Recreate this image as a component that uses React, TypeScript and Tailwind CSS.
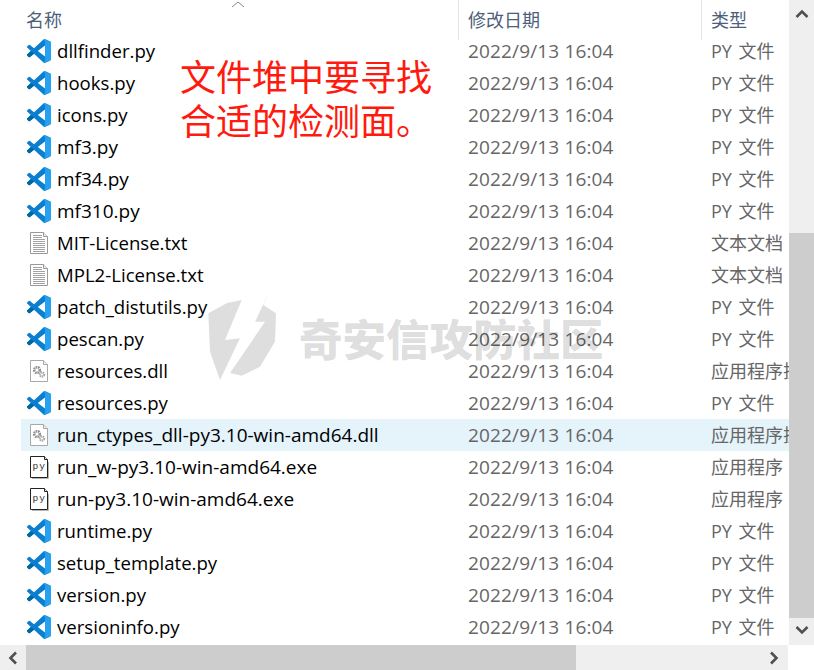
import React from "react";

const time = "2022/9/13 16:04";
type Kind = "vs" | "txt" | "dll" | "exe";
const files: [string, Kind, string][] = [
  ["dllfinder.py", "vs", "PY 文件"],
  ["hooks.py", "vs", "PY 文件"],
  ["icons.py", "vs", "PY 文件"],
  ["mf3.py", "vs", "PY 文件"],
  ["mf34.py", "vs", "PY 文件"],
  ["mf310.py", "vs", "PY 文件"],
  ["MIT-License.txt", "txt", "文本文档"],
  ["MPL2-License.txt", "txt", "文本文档"],
  ["patch_distutils.py", "vs", "PY 文件"],
  ["pescan.py", "vs", "PY 文件"],
  ["resources.dll", "dll", "应用程序扩展"],
  ["resources.py", "vs", "PY 文件"],
  ["run_ctypes_dll-py3.10-win-amd64.dll", "dll", "应用程序扩展"],
  ["run_w-py3.10-win-amd64.exe", "exe", "应用程序"],
  ["run-py3.10-win-amd64.exe", "exe", "应用程序"],
  ["runtime.py", "vs", "PY 文件"],
  ["setup_template.py", "vs", "PY 文件"],
  ["version.py", "vs", "PY 文件"],
  ["versioninfo.py", "vs", "PY 文件"],
];

function VsIcon() {
  return (
    <svg width="24" height="24" viewBox="0 0 24 24">
      <path fill="#0a7fd0" d="M23.15 2.587L18.21.21a1.494 1.494 0 0 0-1.705.29l-9.46 8.63-4.12-3.128a.999.999 0 0 0-1.276.057L.327 7.261A1 1 0 0 0 .326 8.74L3.899 12 .326 15.26a1 1 0 0 0 .001 1.479L1.65 17.94a.999.999 0 0 0 1.276.057l4.12-3.128 9.46 8.63a1.492 1.492 0 0 0 1.704.29l4.942-2.377A1.5 1.5 0 0 0 24 20.06V3.939a1.5 1.5 0 0 0-.85-1.352zm-5.146 14.861L10.826 12l7.178-5.448v10.896z" />
      <path fill="#24a2f0" d="M16.5.5a1.49 1.49 0 0 1 1.71-.29l4.94 2.38A1.5 1.5 0 0 1 24 3.94v16.12a1.5 1.5 0 0 1-.85 1.35l-4.94 2.38a1.49 1.49 0 0 1-1.71-.29L18 22V2z" />
      <path fill="#0066aa" d="M.33 15.26 3.9 12l3.14 2.87-4.12 3.13a1 1 0 0 1-1.27-.06L.33 16.74a1 1 0 0 1 0-1.48z" />
    </svg>
  );
}

function Page({ children, stroke = "#9a9a9a", fold = 4 }: { children?: React.ReactNode; stroke?: string; fold?: number }) {
  return (
    <svg width="24" height="24" viewBox="0 0 24 24">
      <path fill="#fff" stroke={stroke} d={`M3.5 1.5h${17 - fold}l${fold} ${fold}v${21 - fold}h-17z`} />
      <path fill="#eeeeee" stroke={stroke} d={`M${20.5 - fold} 1.5v${fold}h${fold}`} />
      {children}
    </svg>
  );
}

function FileIcon({ kind }: { kind: Kind }) {
  if (kind === "vs") return <VsIcon />;
  if (kind === "txt")
    return (
      <Page>
        {[4, 6, 8, 10, 12, 14, 16, 18, 20].map((y) => (
          <path key={y} stroke="#a4a4a4" d={`M6 ${y + 0.5}h${y < 7 ? 9 : 12}`} />
        ))}
      </Page>
    );
  if (kind === "dll")
    return (
      <Page stroke="#a8a8a8">
        <circle cx="10" cy="11" r="2.8" fill="none" stroke="#8f8f8f" strokeWidth="2.6" strokeDasharray="1.6 0.7" />
        <circle cx="15" cy="15.5" r="2.1" fill="none" stroke="#a6a6a6" strokeWidth="2.2" strokeDasharray="1.3 0.6" />
      </Page>
    );
  return (
    <Page stroke="#222" fold={3}>
      <path stroke="#b5b5b5" fill="none" d="M21.5 7v16.5H5" />
      <text x="5.5" y="14" fontSize="9.5" letterSpacing="1" fontFamily="Liberation Mono, monospace" fill="#333">py</text>
    </Page>
  );
}

function Watermark() {
  return (
    <div className="absolute left-[207px] top-[290px] flex items-center pointer-events-none">
      <svg width="70" height="90" viewBox="0 0 70 90">
        <path fill="#000" fillOpacity="0.13" d="M1.3 23.3 L20 13 L34.7 10 L18 50 L33 48.3 L13 90 L3 61.7 Z" />
        <path fill="#000" fillOpacity="0.13" d="M63 0 L56.3 15 L69 23.3 L68 51.7 L53 76.7 L34.7 85.7 L23 83 L58 31.7 L48 31.7 Z" />
      </svg>
      <div className="ml-[22px] mt-[5px] text-[43.5px] leading-none font-black whitespace-nowrap text-black/15 [font-family:'Noto_Sans_CJK_SC',sans-serif]">
        奇安信攻防社区
      </div>
    </div>
  );
}

function Chevron({ d }: { d: string }) {
  return (
    <svg width="14" height="14" viewBox="0 0 14 14">
      <path d={d} fill="none" stroke="#505050" strokeWidth="2.6" />
    </svg>
  );
}

export default function App() {
  return (
    <div className="relative w-[814px] h-[670px] overflow-hidden bg-white text-[19px] [font-family:'Open_Sans','Noto_Sans_CJK_SC',sans-serif]">
      <div className="flex h-[645px]">
        <div className="w-[789px] overflow-hidden">
          <div className="relative flex h-[35px] text-[#4c607a] text-[18px]">
            <div className="w-[459px] border-r border-[#e5e5e5] pl-[26px] pt-[7px] h-[40px]">名称</div>
            <div className="w-[243px] border-r border-[#e5e5e5] pl-[9px] pt-[7px] h-[40px]">修改日期</div>
            <div className="pl-[9px] pt-[7px]">类型</div>
            <svg className="absolute left-[231px] top-0" width="14" height="8" viewBox="0 0 14 8">
              <path d="M1 7l6-5 6 5" fill="none" stroke="#888" />
            </svg>
          </div>
          {files.map(([name, kind, type]) => (
            <div
              key={name}
              className={`flex h-[32px] items-center ml-[21px] ${name.startsWith("run_ctypes") ? "bg-[#e5f3fb]" : ""}`}
            >
              <div className="w-[437px] flex items-center pl-[6px] gap-[6px] whitespace-nowrap text-black">
                <FileIcon kind={kind} />
                <span className={name.includes("3.10") || name.startsWith("mf") ? "text-[19px]" : "text-[18.6px]"}>{name}</span>
              </div>
              <div className="w-[243px] pl-[10px] text-[#666] tracking-[0.15px]">{time}</div>
              <div className="flex-1 pl-[10px] text-[18px] text-[#666] whitespace-nowrap overflow-hidden [word-spacing:2px]">{type}</div>
            </div>
          ))}
        </div>
        <div className="w-[25px] bg-[#efefef] flex flex-col">
          <div className="h-[233px] flex justify-center pt-[7px]">
            <Chevron d="M1.5 10 7 4.5 12.5 10" />
          </div>
          <div className="h-[385px] bg-[#cdcdcd]" />
          <div className="flex-1 flex justify-center pt-[5px]">
            <Chevron d="M1.5 4 7 9.5 12.5 4" />
          </div>
        </div>
      </div>
      <div className="flex h-[25px] w-[788px] bg-[#efefef]">
        <div className="w-[26px] flex items-center justify-center">
          <Chevron d="M10 1.5 4.5 7 10 12.5" />
        </div>
        <div className="w-[550px] bg-[#cdcdcd]" />
        <div className="flex-1 flex items-center justify-end pr-[7px]">
          <Chevron d="M4 1.5 9.5 7 4 12.5" />
        </div>
      </div>
      <div className="absolute left-[180px] top-[53px] text-[36px] leading-[44px] text-[#ff1a0f] whitespace-nowrap [font-family:'Noto_Sans_CJK_SC',sans-serif]">
        文件堆中要寻找
        <br />
        合适的检测面。
      </div>
      <Watermark />
    </div>
  );
}
